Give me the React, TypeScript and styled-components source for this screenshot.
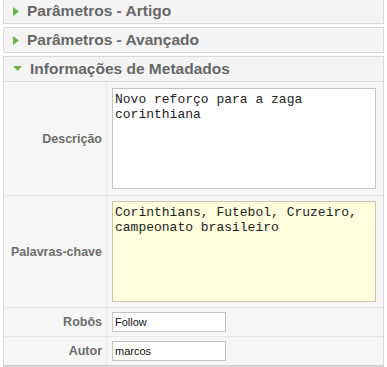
import React from "react";
import styled, { createGlobalStyle } from "styled-components";

const GlobalStyle = createGlobalStyle`
    body {
        margin: 0;
        background: #fff;
        font-family: "Liberation Sans", Arial, sans-serif;
    }
`;

const Page = styled.div`
    width: 387px;
    height: 367px;
    overflow: hidden;
    padding: 0 3px;
    box-sizing: border-box;
`;

const Panels = styled.div`
    margin-top: -2px;
    display: flex;
    flex-direction: column;
    gap: 3px;
`;

const Panel = styled.div`
    border: 1px solid #d9d9d9;
    background: #f4f4f4;
`;

const Header = styled.div<{ $open?: boolean }>`
    height: 24px;
    display: flex;
    align-items: center;
    gap: 8px;
    padding-left: 9px;
    font-size: 15.5px;
    font-weight: bold;
    color: #676767;
    border-bottom: ${(p) => (p.$open ? "1px solid #dcdcdc" : "none")};
`;

const Body = styled.div`
    display: grid;
    grid-template-columns: 103px 1fr;
    background: #f6f6f6;
    border-bottom: 1px solid #cfcfcf;
`;

const Label = styled.div<{ $last?: boolean }>`
    display: flex;
    align-items: center;
    justify-content: flex-end;
    padding-right: 4px;
    font-size: 12.5px;
    font-weight: bold;
    color: #6d6d6d;
    border-right: 1px solid #e9e9e9;
    border-bottom: ${(p) => (p.$last ? "none" : "1px solid #e6e6e6")};
`;

const Field = styled.div<{ $last?: boolean; $pad?: number }>`
    padding: ${(p) => p.$pad ?? 5}px 5px ${(p) => p.$pad ?? 5}px 5px;
    display: flex;
    border-bottom: ${(p) => (p.$last ? "none" : "1px solid #e6e6e6")};
`;

const TextArea = styled.textarea<{ $focus?: boolean }>`
    width: 264px;
    height: 101px;
    box-sizing: border-box;
    resize: none;
    border: 1px solid ${(p) => (p.$focus ? "#c9c9a8" : "#c4c4c4")};
    background: ${(p) => (p.$focus ? "#ffffdd" : "#fff")};
    font-family: "Liberation Mono", "Courier New", monospace;
    font-size: 13px;
    line-height: 15px;
    color: #222;
    padding: 3px 2px;
    margin: 0;
    outline: none;
    overflow: hidden;
`;

const Input = styled.input`
    width: 114px;
    height: 20px;
    box-sizing: border-box;
    border: 1px solid #c4c4c4;
    background: #fff;
    font-family: "Liberation Sans", Arial, sans-serif;
    font-size: 11px;
    color: #111;
    padding: 1px 2px;
    margin: 0;
    outline: none;
`;

const Arrow = ({ open }: { open?: boolean }) =>
    open ? (
        <svg width="9" height="6" viewBox="0 0 9 6">
            <polygon points="0,0 9,0 4.5,5" fill="#6bb24a" />
        </svg>
    ) : (
        <svg width="6" height="9" viewBox="0 0 6 9">
            <polygon points="0,0 6,4.5 0,9" fill="#6bb24a" />
        </svg>
    );

const App = () => {
    return (
        <Page>
            <GlobalStyle />
            <Panels>
                <Panel>
                    <Header>
                        <Arrow />
                        Parâmetros - Artigo
                    </Header>
                </Panel>
                <Panel>
                    <Header>
                        <Arrow />
                        Parâmetros - Avançado
                    </Header>
                </Panel>
                <Panel>
                    <Header $open>
                        <Arrow open />
                        Informações de Metadados
                    </Header>
                    <Body>
                        <Label>Descrição</Label>
                        <Field $pad={6}>
                            <TextArea readOnly defaultValue="Novo reforço para a zaga corinthiana" />
                        </Field>
                        <Label>Palavras-chave</Label>
                        <Field>
                            <TextArea
                                $focus
                                readOnly
                                defaultValue="Corinthians, Futebol, Cruzeiro, campeonato brasileiro"
                            />
                        </Field>
                        <Label>Robôs</Label>
                        <Field $pad={4}>
                            <Input readOnly defaultValue="Follow" />
                        </Field>
                        <Label $last>Autor</Label>
                        <Field $pad={4} $last>
                            <Input readOnly defaultValue="marcos" />
                        </Field>
                    </Body>
                </Panel>
            </Panels>
        </Page>
    );
};

export default App;
